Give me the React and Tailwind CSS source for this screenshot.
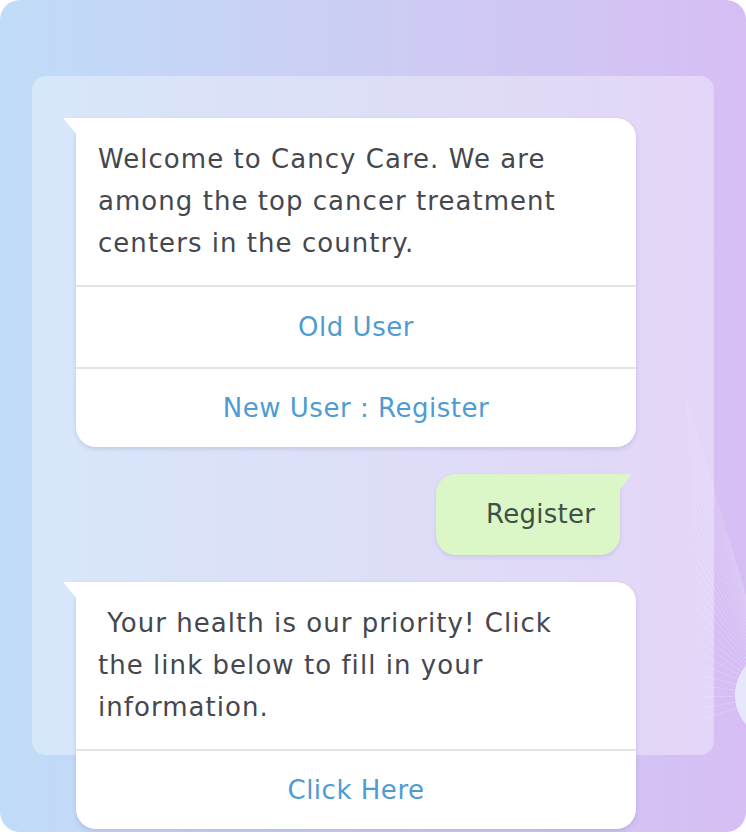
import React from 'react';

const font = { fontFamily: '"DejaVu Sans", "Open Sans", sans-serif' };

function BotBubble({ text, actions }) {
  return (
    <div className="relative w-[560px] rounded-[20px] rounded-tl-none bg-white shadow-[0_2px_4px_rgba(90,80,140,0.18)]">
      <svg className="absolute -left-[13px] top-0" width="14" height="17" viewBox="0 0 14 17">
        <path d="M14 0 L2 0 Q0 0 1.2 1.6 L14 17 Z" fill="#fff" />
      </svg>
      <p className="px-[22px] pt-[20px] pb-[21px] text-[26px] tracking-[0.04em] leading-[42px] text-[#45474f] whitespace-pre">
        {text}
      </p>
      {actions.map((a, i) => (
        <div
          key={a}
          className={`flex items-center justify-center border-t-2 border-[#e3e3e6] text-[26px] tracking-[0.02em] text-[#4f9bd3] ${
            i === actions.length - 1 ? 'h-[80px]' : 'h-[82px]'
          }`}
        >
          {a}
        </div>
      ))}
    </div>
  );
}

export default function App() {
  return (
    <div className="w-[746px] h-[834px] overflow-hidden bg-white" style={font}>
      <div className="relative w-[746px] h-[832px] overflow-hidden rounded-[20px] bg-gradient-to-r from-[#c0dcf8] via-[#cccdf3] to-[#d6bef4]">
        <svg className="absolute right-0 top-[380px]" width="80" height="440" viewBox="0 0 80 440">
          {Array.from({ length: 30 }).map((_, i) => (
            <line
              key={i}
              x1="110"
              y1={315}
              x2={20 + i * 0.6}
              y2={20 + i * 11}
              stroke="#ffffff"
              strokeOpacity="0.2"
              strokeWidth="1"
            />
          ))}
          <circle cx="114" cy="315" r="45" fill="#e8e9fb" fillOpacity="0.95" />
        </svg>

        <div className="relative ml-[32px] mt-[76px] h-[679px] w-[682px] rounded-[14px] bg-white/35 pl-[44px] pt-[42px]">
          <div className="flex flex-col gap-[27px]">
            <BotBubble
              text={'Welcome to Cancy Care. We are\namong the top cancer treatment\ncenters in the country.'}
              actions={['Old User', 'New User : Register']}
            />

            <div className="flex w-[560px] justify-end">
              <div className="relative mr-[16px] flex h-[81px] w-[184px] items-center rounded-[20px] rounded-tr-none bg-[#dbf7c8] pl-[50px] text-[26px] tracking-[0.01em] text-[#3e5148] shadow-[0_2px_4px_rgba(90,80,140,0.15)]">
                <svg className="absolute -right-[12px] top-0" width="13" height="17" viewBox="0 0 13 17">
                  <path d="M0 0 L11 0 Q13 0 11.8 1.6 L0 17 Z" fill="#dbf7c8" />
                </svg>
                Register
              </div>
            </div>

            <BotBubble
              text={' Your health is our priority! Click\nthe link below to fill in your\ninformation.'}
              actions={['Click Here']}
            />
          </div>
        </div>
      </div>
    </div>
  );
}
